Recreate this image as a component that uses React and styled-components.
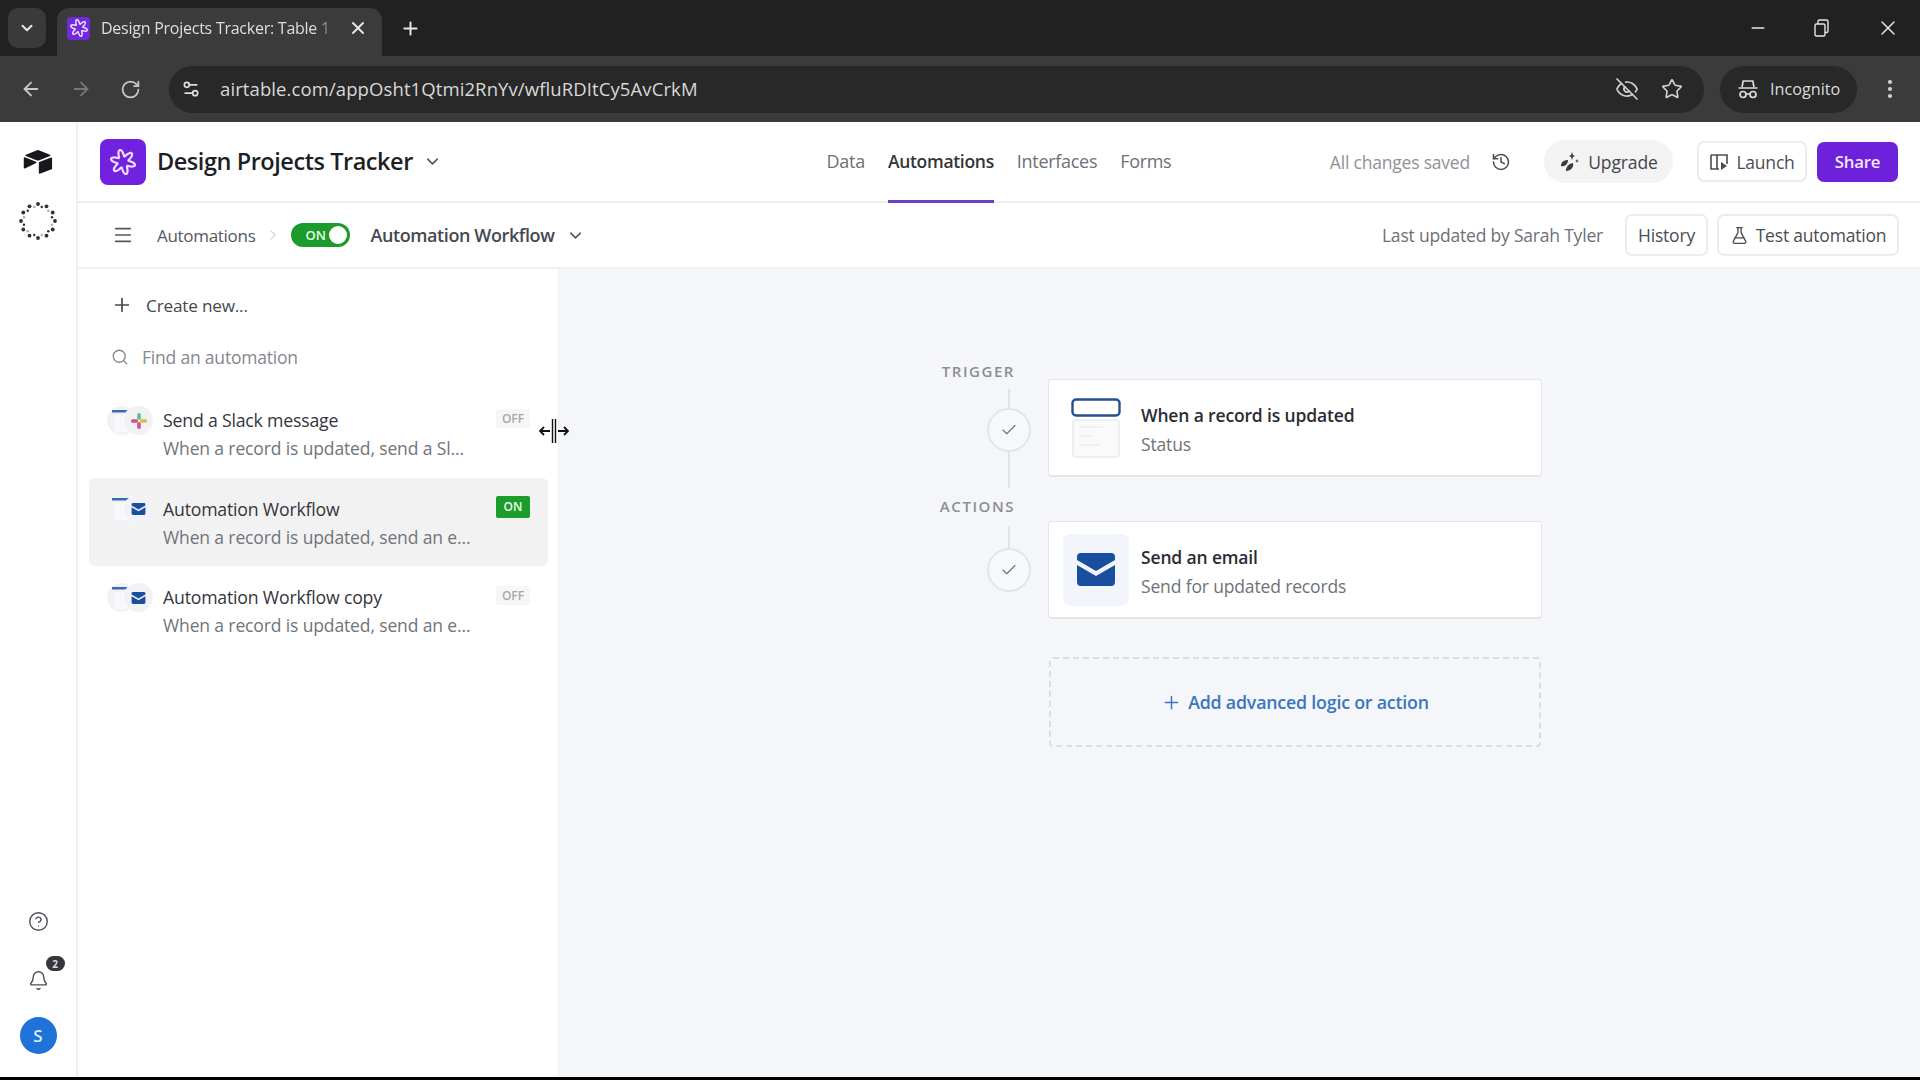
import React from "react";
import styled, { createGlobalStyle } from "styled-components";
import {
  ArrowLeft, ArrowRight, Bell, Check, ChevronDown, ChevronRight, CircleHelp, EyeOff, FlaskConical,
  History as HistoryIcon, Menu, Minus, MoreVertical, Plus, RotateCw, Search, Settings2, Star, X,
} from "lucide-react";

const Global = createGlobalStyle`
  html, body { margin: 0; padding: 0; background: #000; }
  * { box-sizing: border-box; }
  body { font-family: "Open Sans", "Noto Sans", "Liberation Sans", sans-serif; color: #1d1f25; }
`;

const Page = styled.div`
  width: 1920px; height: 1080px; display: flex; flex-direction: column; overflow: hidden; position: relative;
  padding-bottom: 3px; background: #000;
`;

/* Browser chrome */
const TabStrip = styled.div`
  height: 56px; background: #212121; display: flex; align-items: flex-end; padding-left: 8px; color: #e8e8e8; flex: none;
`;
const TabSearch = styled.div`
  width: 38px; height: 40px; margin-bottom: 8px; border-radius: 10px; background: #3a3a3a;
  display: flex; align-items: center; justify-content: center;
`;
const Tab = styled.div`
  width: 325px; height: 48px; margin-left: 11px; background: #3b3b3b; border-radius: 12px 12px 0 0;
  display: flex; align-items: center; padding: 0 12px 8px 10px; gap: 11px; position: relative;
`;
const Favicon = styled.div`
  width: 23px; height: 23px; border-radius: 4px; background: #6f2bdc; display: flex; align-items: center; justify-content: center; flex: none;
`;
const TabTitle = styled.span`
  font-size: 16px; white-space: nowrap; overflow: hidden; width: 236px; letter-spacing: -0.25px; color: #dedede;
  -webkit-mask-image: linear-gradient(90deg, #000 90%, transparent 100%);
  mask-image: linear-gradient(90deg, #000 90%, transparent 100%);
`;
const NewTab = styled.div`
  margin: 0 0 15px 18px; height: 26px; display: flex; align-items: center;
`;
const WindowControls = styled.div`
  margin-left: auto; height: 56px; display: flex; align-items: center; gap: 44px; padding-right: 20px; color: #e6e6e6;
`;
const RestoreGlyph = styled.svg`
  width: 20px; height: 20px; fill: none; stroke: currentColor; stroke-width: 1.4;
`;
const Toolbar = styled.div`
  height: 66px; flex: none; background: #3b3b3b; display: flex; align-items: center; padding: 0 0 0 20px; color: #c9c9c9;
`;
const NavGroup = styled.div`
  display: flex; align-items: center; gap: 28px; width: 149px;
`;
const Address = styled.div`
  width: 1535px; height: 47px; background: #282828; border-radius: 24px; display: flex; align-items: center;
  padding: 0 21px 0 12px; color: #dcdcdc;
`;
const UrlText = styled.span`
  margin: -2px 0 0 19px; font-size: 18.5px; letter-spacing: 0.1px; flex: 1; white-space: nowrap; color: #d8d8d8;
`;
const AddressIcons = styled.div`
  display: flex; align-items: center; gap: 22px; color: #d0d0d0;
`;
const IncognitoPill = styled.div`
  margin-left: 16px; width: 137px; height: 47px; border-radius: 24px; background: #282828; display: flex; align-items: center;
  padding-left: 17px; gap: 11px; font-size: 16.2px; color: #dcdcdc;
`;
const MenuDots = styled.div`
  margin-left: 21px; display: flex; color: #d0d0d0;
`;

/* App */
const AppBody = styled.div`
  flex: 1; min-height: 0; display: flex; background: #fff;
`;
const Rail = styled.aside`
  width: 78px; flex: none; border-right: 2px solid #eeeff1; display: flex; flex-direction: column; align-items: center;
  padding: 26px 0 23px; color: #4b4f57;
`;
const RailLogo = styled.div`
  width: 32px; height: 28px; display: flex;
`;
const RailDots = styled.div`
  width: 38px; height: 38px; margin-top: 26px; display: flex;
`;
const RailBottom = styled.div`
  margin-top: auto; display: flex; flex-direction: column; align-items: center; gap: 38px;
`;
const BellWrap = styled.div`
  position: relative; display: flex;
`;
const CountBadge = styled.span`
  position: absolute; top: -14px; left: 18px; width: 19px; height: 15px; border-radius: 8px; background: #34363c; color: #ddd;
  font-size: 10px; font-weight: 700; display: flex; align-items: center; justify-content: center;
`;
const Avatar = styled.div`
  width: 37px; height: 37px; margin-top: -12px; border-radius: 50%; background: #1f73d8; color: #dff0ff; font-size: 17px; font-weight: 600;
  display: flex; align-items: center; justify-content: center;
`;
const Main = styled.div`
  flex: 1; min-width: 0; display: flex; flex-direction: column;
`;
const AppHeader = styled.header`
  height: 81px; flex: none; border-bottom: 2px solid #eeeff2; display: grid; grid-template-columns: 1fr auto 1fr; padding: 0 22px;
`;
const Brand = styled.div`
  display: flex; align-items: center;
`;
const BaseIcon = styled.div`
  width: 46px; height: 46px; border-radius: 8px; background: #7022de; display: flex; align-items: center; justify-content: center; margin-right: 11px;
`;
const BaseTitle = styled.h1`
  margin: -2px 10px 0 0; font-size: 23.5px; font-weight: 600; letter-spacing: -0.45px; color: #1d1f25;
`;
const Tabs = styled.nav`
  display: flex; gap: 23px; height: 81px; margin-bottom: -2px;
`;
const TabLink = styled.a`
  display: flex; align-items: center; font-size: ${p => (p.$active ? 17.5 : 18)}px; letter-spacing: -0.3px; font-weight: ${p => (p.$active ? 600 : 500)};
  color: ${p => (p.$active ? "#33353b" : "#6d7078")}; border-bottom: 3px solid ${p => (p.$active ? "#6d3fc8" : "transparent")};
`;
const HeaderRight = styled.div`
  display: flex; align-items: center; justify-content: flex-end;
`;
const Saved = styled.span`
  font-size: 17.5px; color: #8e9198; letter-spacing: -0.2px;
`;
const SavedHistory = styled.span`
  display: flex; margin: 0 33px 0 21px; color: #4c4f55;
`;
const UpgradePill = styled.button`
  height: 43px; width: 129px; border: 0; border-radius: 22px; background: #f3f3f4; font: inherit; font-size: 17.5px; color: #43464c;
  display: flex; align-items: center; justify-content: center; gap: 8px; letter-spacing: -0.1px;
`;
const OutlineButton = styled.button`
  height: ${p => p.$h || 40}px; width: ${p => p.$w}px; margin-left: ${p => p.$ml || 0}px; border: 2px solid #ebecef; border-radius: 7px; background: #fff;
  font: inherit; font-size: 17.5px; color: #4a4d54; letter-spacing: -0.2px; display: flex; align-items: center; justify-content: center; gap: 7px;
`;
const ShareButton = styled.button`
  width: 81px; height: 40px; margin-left: 10px; border: 0; border-radius: 7px; background: #6d22d9; color: #f3e6ff; font: inherit;
  font-size: 16.8px; font-weight: 600; letter-spacing: -0.2px;
`;
const SubHeader = styled.div`
  height: 66px; flex: none; border-bottom: 2px solid #f0f1f3; display: flex; align-items: center; padding: 0 21px 0 34px; color: #54575e;
`;
const Crumb = styled.span`
  margin-left: 23px; font-size: 17px; letter-spacing: -0.3px; color: #54575e;
`;
const CrumbChevron = styled(ChevronRight)`
  margin-left: 10px; color: #d5d6da;
`;
const Toggle = styled.div`
  margin-left: 10px; width: 59px; height: 24px; border-radius: 12px; background: #1c9a2c; color: #e8ffe8; font-size: 13px; font-weight: 600;
  display: flex; align-items: center; justify-content: space-between; padding: 0 3px 0 14px;
`;
const ToggleKnob = styled.span`
  width: 18px; height: 18px; border-radius: 50%; background: #fff;
`;
const WorkflowName = styled.span`
  margin: 0 12px 0 20px; font-size: 18px; font-weight: 600; letter-spacing: -0.4px; color: #45484f;
`;
const Updated = styled.span`
  margin-left: auto; margin-right: 22px; font-size: 17.5px; letter-spacing: -0.2px; color: #6d7078;
`;
const Content = styled.div`
  flex: 1; min-height: 0; display: flex;
`;
const Sidebar = styled.div`
  width: 480px; flex: none; padding: 15px 10px 0 11px; background: #fff; position: relative;
`;
const CreateRow = styled.div`
  height: 42px; display: flex; align-items: center; padding-left: 22px; gap: 13px; font-size: 17.2px; letter-spacing: -0.2px; color: #44474e;
`;
const SearchRow = styled.div`
  height: 42px; margin-top: 10px; display: flex; align-items: center; padding-left: 22px; gap: 13px; font-size: 17.5px; letter-spacing: -0.2px; color: #84878e;
`;
const List = styled.div`
  margin-top: 11px; display: flex; flex-direction: column;
`;
const Item = styled.div`
  height: 88.7px; padding: 18px 16px 0 74px; border-radius: 6px; position: relative; background: ${p => (p.$active ? "#f2f2f3" : "transparent")};
`;
const ItemIcons = styled.div`
  position: absolute; left: 18px; top: 17px; display: flex;
`;
const IconBubble = styled.div`
  width: 29px; height: 29px; border-radius: 50%; background: #f1f2f5; display: flex; align-items: center; justify-content: center;
  & + & { margin-left: -12px; box-shadow: -1px 0 0 rgba(255,255,255,.8); }
`;
const ItemTitle = styled.div`
  font-size: 17.7px; font-weight: 500; letter-spacing: -0.2px; line-height: 26px; color: #33363c;
`;
const ItemDesc = styled.div`
  margin-top: 2px; font-size: 17.5px; letter-spacing: -0.13px; line-height: 26px; color: #71747b; white-space: nowrap;
`;
const StatusTag = styled.span`
  position: absolute; right: 18px; top: ${p => (p.$on ? 18 : 20)}px; width: 34px; height: ${p => (p.$on ? 22 : 19)}px; border-radius: 2px;
  background: ${p => (p.$on ? "#1b9c2b" : "#f6f6f7")}; color: ${p => (p.$on ? "#e9ffe9" : "#a6a8ad")}; font-size: 12px; font-weight: 600;
  display: flex; align-items: center; justify-content: center;
`;
const ResizeCursor = styled.div`
  position: absolute; left: -19px; top: 0; display: flex;
`;
const ResizeAnchor = styled.div`
  position: absolute; right: 0; top: 149px; width: 0; height: 0;
`;
const Canvas = styled.div`
  flex: 1; background: #f5f6f9; padding: 94px 0 0 382px; border-left: 1px solid #eff0f3;
`;
const Step = styled.div`
  display: flex; align-items: flex-start; margin-top: ${p => p.$mt || 0}px;
`;
const StepRail = styled.div`
  width: 107px; padding-right: 17px; display: flex; flex-direction: column; align-items: flex-end; flex: none;
`;
const StepLabel = styled.div`
  margin-right: 16px; font-size: 15px; line-height: 16px; font-weight: 600; letter-spacing: 1.55px; color: #8b8e94;
`;
const Connector = styled.div`
  width: 2px; height: ${p => p.$h}px; margin: ${p => p.$mt || 0}px 21px 0; background: #e1e2e5;
`;
const CheckCircle = styled.div`
  width: 44px; height: 44px; border-radius: 50%; border: 2px solid #e3e4e7; background: #f7f8fa; color: #6d7078;
  display: flex; align-items: center; justify-content: center;
`;
const Card = styled.div`
  width: 494px; height: 98px; margin-top: ${p => p.$mt}px; background: #fff; border: 1px solid #e4e5e8; border-bottom-width: 2px; border-radius: 4px;
  display: flex; align-items: center; padding-left: 14px;
`;
const CardIcon = styled.div`
  width: 66px; height: 72px; border-radius: 7px; background: ${p => p.$tint ? "#f2f5fb" : "transparent"};
  display: flex; align-items: center; justify-content: center; margin-right: 12px; flex: none;
`;
const CardBody = styled.div`
  padding-top: 3px;
`;
const CardTitle = styled.div`
  font-size: 17.5px; font-weight: 600; letter-spacing: -0.15px; line-height: 24px; color: #2a2c33;
`;
const CardSub = styled.div`
  margin-top: 5px; font-size: 17.5px; line-height: 24px; letter-spacing: -0.15px; color: #6f7279;
`;
const AddBox = styled.div`
  width: 492px; height: 90px; margin: 38px 0 0 108px; border: 2px dashed #dcdde1; border-radius: 4px; color: #3a75c0;
  display: flex; align-items: center; justify-content: center; gap: 6px; font-size: 17.8px; font-weight: 600; letter-spacing: -0.2px;
`;

/* Drawn icons */
const flower = (() => {
  const pts = [];
  for (let i = 0; i < 180; i++) {
    const t = (i / 180) * Math.PI * 2;
    const r = 8.3 + 3.1 * Math.cos(6 * t - Math.PI / 2);
    pts.push(`${(12 + r * Math.cos(t)).toFixed(2)} ${(12 + r * Math.sin(t)).toFixed(2)}`);
  }
  return `M${pts.join("L")}Z`;
})();
const FlowerMark = ({ size, w = 1.8 }) => (
  <svg width={size} height={size} viewBox="0 0 24 24" fill="none" stroke="#f0dcff" strokeWidth={w} strokeLinejoin="round"><path d={flower} /></svg>
);
const AirtableLogo = () => (
  <svg width="32" height="28" viewBox="0 0 200 170" fill="#17181c">
    <path d="M90.039 12.368 24.079 39.66c-3.667 1.519-3.63 6.729.062 8.192l66.235 26.266a24.58 24.58 0 0 0 18.12 0l66.236-26.266c3.69-1.463 3.729-6.673.062-8.192l-65.96-27.292a24.58 24.58 0 0 0-18.795 0" />
    <path d="M105.312 88.46v65.617c0 3.12 3.147 5.258 6.048 4.108l73.806-28.648a4.42 4.42 0 0 0 2.79-4.108V60.813c0-3.121-3.147-5.258-6.048-4.108l-73.806 28.648a4.42 4.42 0 0 0-2.79 4.108" />
    <path d="M88.078 91.846l-21.904 10.576-2.224 1.075-46.238 22.155c-2.93 1.414-6.672-.722-6.672-3.978V60.088c0-1.178.604-2.195 1.414-2.96a5 5 0 0 1 1.12-.84c1.104-.663 2.68-.84 4.02-.31l70.118 27.782c3.564 1.414 3.844 6.408.366 8.086" />
  </svg>
);
const DotRing = () => (
  <svg width="38" height="38" viewBox="0 0 38 38">
    {Array.from({ length: 24 }).map((_, i) => {
      const a = (i / 24) * Math.PI * 2;
      const big = i % 2 === 0;
      const r = big ? 17 : 14.5;
      return <circle key={i} cx={19 + r * Math.cos(a)} cy={19 + r * Math.sin(a)} r={big ? 1.9 : 1.2} fill={i % 4 === 1 ? "#a9abb1" : "#2d2f34"} />;
    })}
  </svg>
);
const MailGlyph = ({ w, h, color = "#1a4fa0" }) => (
  <svg width={w} height={h} viewBox="0 0 38 33">
    <path fill={color} d="M4 0h30a4 4 0 0 1 4 4v3L19 18 0 7V4a4 4 0 0 1 4-4z" />
    <path fill={color} d="M0 12l19 11 19-11v17a4 4 0 0 1-4 4H4a4 4 0 0 1-4-4z" />
  </svg>
);
const MiniTrigger = () => (
  <svg width="20" height="24" viewBox="0 0 20 24" fill="none">
    <rect x="2" y="6" width="16" height="17" rx="1" fill="#f8f8fa" />
    <rect x="0" y="1" width="17" height="2.5" fill="#3a6bb0" />
  </svg>
);
const TriggerGlyph = () => (
  <svg width="50" height="60" viewBox="0 0 50 60" fill="none">
    <rect x="2" y="22" width="46" height="37" rx="2" fill="#fafafb" stroke="#e9eaed" strokeWidth="1.5" />
    <path d="M8 29h24M8 38h14M8 47h20" stroke="#eff0f2" strokeWidth="2" />
    <rect x="1.5" y="1.5" width="47" height="16" rx="3.5" fill="#fff" stroke="#27508f" strokeWidth="2.4" />
  </svg>
);
const SlackGlyph = () => (
  <svg width="18" height="18" viewBox="0 0 20 20">
    <rect x="8" y="1" width="4" height="8" rx="2" fill="#5fbf8f" />
    <rect x="11" y="8" width="8" height="4" rx="2" fill="#e3b84a" />
    <rect x="8" y="11" width="4" height="8" rx="2" fill="#d9507f" />
    <rect x="1" y="8" width="8" height="4" rx="2" fill="#d9507f" />
  </svg>
);
const LaunchGlyph = () => (
  <svg width="20" height="20" viewBox="0 0 20 20" fill="none" stroke="#4a4d54" strokeWidth="1.6">
    <path d="M2 3h16v9M8 3v14M2 3v14h8" />
    <path d="M12 10l6 4-6 4z" fill="#4a4d54" stroke="none" />
  </svg>
);
const SparkleLeaf = () => (
  <svg width="21" height="22" viewBox="0 0 21 22" fill="#3a3c42">
    <path d="M2 15c0-4 3-6 7-6 0 4-3 7-7 6zM7 20c0-4 2-7 7-8 1 4-2 8-7 8z" />
    <path d="M13 1l1 3 2 1-2 1-1 3-1-3-2-1 2-1zM18 8l.6 1.4L20 10l-1.4.6L18 12l-.6-1.4L16 10l1.4-.6z" />
  </svg>
);
const IncognitoGlyph = () => (
  <svg width="22" height="22" viewBox="0 0 22 22" fill="none" stroke="#dcdcdc" strokeWidth="1.7">
    <path d="M5 9l1.2-6h9.6L17 9M1.5 10h19" />
    <circle cx="6" cy="16.5" r="3" /><circle cx="16" cy="16.5" r="3" /><path d="M9 16h4" />
  </svg>
);
const ResizeGlyph = () => (
  <svg width="30" height="26" viewBox="0 0 30 26" fill="none" stroke="#111">
    <path d="M13.5 1v24M16.5 1v24" strokeWidth="1.4" />
    <path d="M1 13h10M5 9l-4 4 4 4M19 13h10M25 9l4 4-4 4" strokeWidth="1.8" />
  </svg>
);

const automations = [
  { title: "Send a Slack message", desc: "When a record is updated, send a Sl...", slack: true },
  { title: "Automation Workflow", desc: "When a record is updated, send an e...", on: true },
  { title: "Automation Workflow copy", desc: "When a record is updated, send an e..." },
];

export default function App() {
  return (
    <Page>
      <Global />
      <TabStrip>
        <TabSearch><ChevronDown size={18} strokeWidth={2.6} /></TabSearch>
        <Tab>
          <Favicon><FlowerMark size={18} w={2} /></Favicon>
          <TabTitle>Design Projects Tracker: Table 1</TabTitle>
          <X size={20} strokeWidth={2.4} />
        </Tab>
        <NewTab><Plus size={21} strokeWidth={2.2} /></NewTab>
        <WindowControls>
          <Minus size={20} strokeWidth={1.6} />
          <RestoreGlyph viewBox="0 0 20 20"><rect x="3" y="6" width="10" height="12" rx="1.5" /><path d="M6 6V3.5A1.5 1.5 0 0 1 7.5 2h7A1.5 1.5 0 0 1 16 3.5V13a1.5 1.5 0 0 1-1.5 1.5H13" /></RestoreGlyph>
          <X size={24} strokeWidth={1.5} />
        </WindowControls>
      </TabStrip>
      <Toolbar>
        <NavGroup>
          <ArrowLeft size={22} />
          <ArrowRight size={22} color="#777" />
          <RotateCw size={21} />
        </NavGroup>
        <Address>
          <Settings2 size={20} />
          <UrlText>airtable.com/appOsht1Qtmi2RnYv/wfluRDItCy5AvCrkM</UrlText>
          <AddressIcons>
            <EyeOff size={24} strokeWidth={1.7} />
            <Star size={22} strokeWidth={1.8} />
          </AddressIcons>
        </Address>
        <IncognitoPill><IncognitoGlyph />Incognito</IncognitoPill>
        <MenuDots><MoreVertical size={24} strokeWidth={2.2} /></MenuDots>
      </Toolbar>
      <AppBody>
        <Rail>
          <RailLogo><AirtableLogo /></RailLogo>
          <RailDots><DotRing /></RailDots>
          <RailBottom>
            <CircleHelp size={21} strokeWidth={1.6} />
            <BellWrap>
              <Bell size={21} strokeWidth={1.6} />
              <CountBadge>2</CountBadge>
            </BellWrap>
            <Avatar>S</Avatar>
          </RailBottom>
        </Rail>
        <Main>
          <AppHeader>
            <Brand>
              <BaseIcon><FlowerMark size={26} w={2} /></BaseIcon>
              <BaseTitle>Design Projects Tracker</BaseTitle>
              <ChevronDown size={19} color="#555" />
            </Brand>
            <Tabs>
              <TabLink>Data</TabLink>
              <TabLink $active>Automations</TabLink>
              <TabLink>Interfaces</TabLink>
              <TabLink>Forms</TabLink>
            </Tabs>
            <HeaderRight>
              <Saved>All changes saved</Saved>
              <SavedHistory><HistoryIcon size={20} strokeWidth={1.9} /></SavedHistory>
              <UpgradePill><SparkleLeaf />Upgrade</UpgradePill>
              <OutlineButton $w={110} $h={41} $ml={24}><LaunchGlyph />Launch</OutlineButton>
              <ShareButton>Share</ShareButton>
            </HeaderRight>
          </AppHeader>
          <SubHeader>
            <Menu size={22} strokeWidth={1.8} />
            <Crumb>Automations</Crumb>
            <CrumbChevron size={16} />
            <Toggle>ON<ToggleKnob /></Toggle>
            <WorkflowName>Automation Workflow</WorkflowName>
            <ChevronDown size={19} />
            <Updated>Last updated by Sarah Tyler</Updated>
            <OutlineButton $w={83} $h={42}>History</OutlineButton>
            <OutlineButton $w={182} $h={42} $ml={9}><FlaskConical size={19} strokeWidth={1.7} />Test automation</OutlineButton>
          </SubHeader>
          <Content>
            <Sidebar>
              <CreateRow><Plus size={22} strokeWidth={1.8} />Create new...</CreateRow>
              <SearchRow><Search size={18} strokeWidth={1.7} />Find an automation</SearchRow>
              <List>
                {automations.map(a => (
                  <Item key={a.title} $active={a.on}>
                    <ItemIcons>
                      <IconBubble><MiniTrigger /></IconBubble>
                      <IconBubble>{a.slack ? <SlackGlyph /> : <MailGlyph w={15} h={12} />}</IconBubble>
                    </ItemIcons>
                    <ItemTitle>{a.title}</ItemTitle>
                    <ItemDesc>{a.desc}</ItemDesc>
                    <StatusTag $on={a.on}>{a.on ? "ON" : "OFF"}</StatusTag>
                  </Item>
                ))}
              </List>
              <ResizeAnchor><ResizeCursor><ResizeGlyph /></ResizeCursor></ResizeAnchor>
            </Sidebar>
            <Canvas>
              <Step>
                <StepRail>
                  <StepLabel>TRIGGER</StepLabel>
                  <Connector $h={19} $mt={10} />
                  <CheckCircle><Check size={18} strokeWidth={1.5} /></CheckCircle>
                  <Connector $h={36} />
                </StepRail>
                <Card $mt={16}>
                  <CardIcon><TriggerGlyph /></CardIcon>
                  <CardBody>
                    <CardTitle>When a record is updated</CardTitle>
                    <CardSub>Status</CardSub>
                  </CardBody>
                </Card>
              </Step>
              <Step $mt={10}>
                <StepRail>
                  <StepLabel>ACTIONS</StepLabel>
                  <Connector $h={22} $mt={12} />
                  <CheckCircle><Check size={18} strokeWidth={1.5} /></CheckCircle>
                </StepRail>
                <Card $mt={23}>
                  <CardIcon $tint><MailGlyph w={38} h={33} /></CardIcon>
                  <CardBody>
                    <CardTitle>Send an email</CardTitle>
                    <CardSub>Send for updated records</CardSub>
                  </CardBody>
                </Card>
              </Step>
              <AddBox><Plus size={21} strokeWidth={1.7} />Add advanced logic or action</AddBox>
            </Canvas>
          </Content>
        </Main>
      </AppBody>
    </Page>
  );
}
